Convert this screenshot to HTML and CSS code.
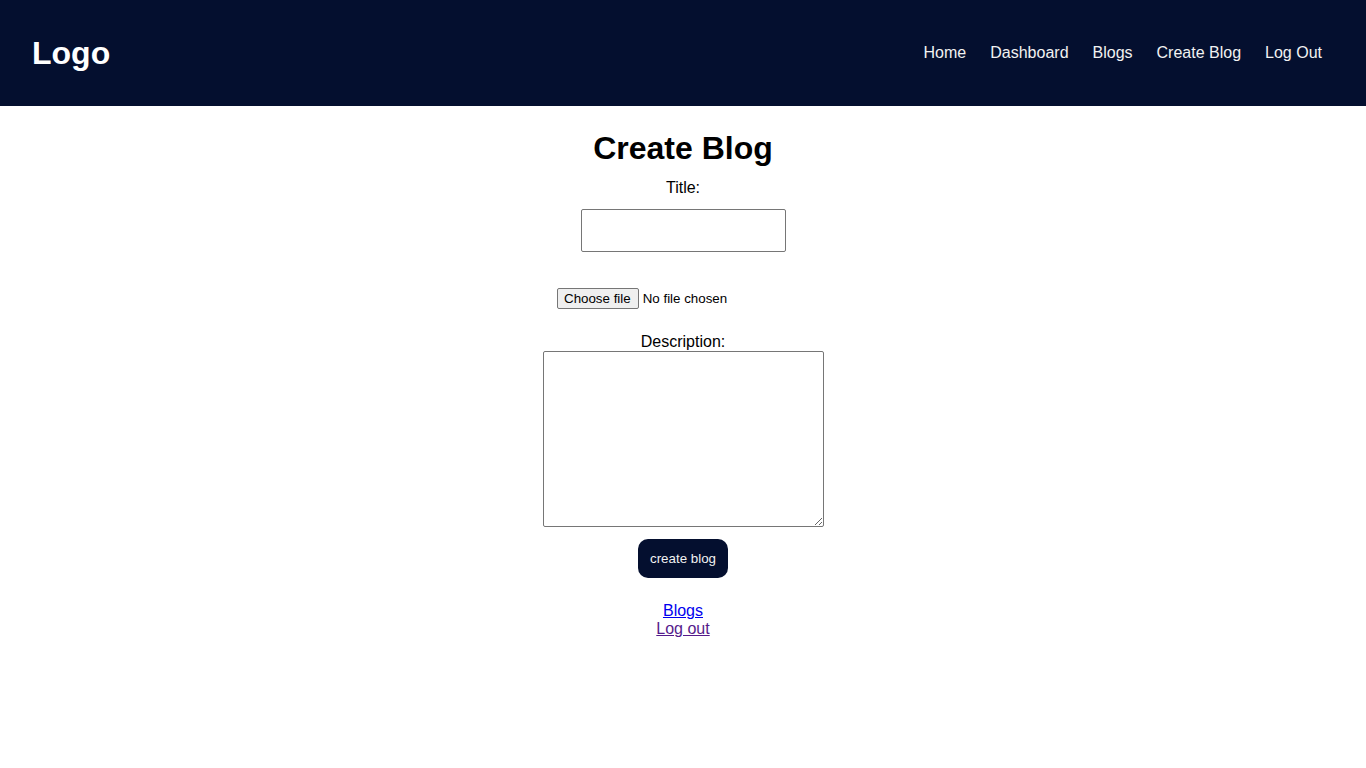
FILE: index.html
```html
<!DOCTYPE html>
<html>
<head>
<meta charset="utf-8">
<title>Create Blog</title>
<link rel="stylesheet" href="styles.css">
</head>
<body>
<header class="topbar">
  <div class="logo">Logo</div>
  <nav class="nav">
    <a href="#">Home</a>
    <a href="#">Dashboard</a>
    <a href="#">Blogs</a>
    <a href="#">Create Blog</a>
    <a href="#">Log Out</a>
  </nav>
</header>
<main class="page">
  <h1 class="heading">Create Blog</h1>
  <form class="form">
    <label class="label" for="title">Title:</label>
    <input class="text-input" id="title" type="text">
    <label class="file-picker">
      <input class="file-hidden" type="file">
      <span class="file-btn">Choose file</span>
      <span class="file-status">No file chosen</span>
    </label>
    <label class="label label-desc" for="desc">Description:</label>
    <textarea class="textarea" id="desc"></textarea>
    <button class="submit" type="button">create blog</button>
  </form>
  <div class="links">
    <a href="#" class="link">Blogs</a>
    <a href="#" class="link visited">Log out</a>
  </div>
</main>
</body>
</html>
```
FILE: styles.css
```css
html, body {
  margin: 0;
  padding: 0;
  background: #ffffff;
  font-family: "Liberation Sans", Arial, sans-serif;
}

.topbar {
  height: 106px;
  background: #040f2f;
  display: flex;
  align-items: center;
  justify-content: space-between;
  padding: 0 44px 0 32px;
}

.logo {
  color: #ffffff;
  font-size: 32px;
  font-weight: bold;
}

.nav {
  display: flex;
  gap: 24px;
}

.nav a {
  color: #f2f2f2;
  text-decoration: none;
  font-size: 16px;
}

.page {
  display: flex;
  flex-direction: column;
  align-items: center;
}

.heading {
  font-size: 32px;
  font-weight: bold;
  margin: 24px 0 12px;
  color: #000;
}

.form {
  display: flex;
  flex-direction: column;
  align-items: center;
}

.label {
  font-size: 16px;
  color: #000;
  line-height: 18px;
}

.text-input {
  box-sizing: border-box;
  width: 205px;
  height: 43px;
  margin-top: 12px;
  border: 1px solid #767676;
  border-radius: 2px;
  padding: 1px 4px;
}

.file-picker {
  margin-top: 36px;
  width: 252px;
  display: flex;
  align-items: center;
  gap: 4px;
  font-size: 13.333px;
  font-family: "Liberation Sans", Arial, sans-serif;
  color: #000;
}

.file-hidden {
  display: none;
}

.file-btn {
  box-sizing: border-box;
  height: 21px;
  line-height: 19px;
  padding: 0 7px 0 6px;
  background: #efefef;
  border: 1px solid #767676;
  border-radius: 2px;
}

.label-desc {
  margin-top: 24px;
}

.textarea {
  box-sizing: border-box;
  width: 281px;
  height: 176px;
  margin-top: 0;
  border: 1px solid #767676;
  border-radius: 2px;
}

.submit {
  margin-top: 12px;
  width: 90px;
  height: 39px;
  background: #040f2f;
  color: #f2f2f2;
  border: none;
  border-radius: 10px;
  font-size: 13.333px;
  font-family: "Liberation Sans", Arial, sans-serif;
}

.links {
  margin-top: 24px;
  display: flex;
  flex-direction: column;
  align-items: center;
  font-size: 16px;
  line-height: 18px;
}

.link {
  color: #0000ee;
}

.link.visited {
  color: #551a8b;
}
```
